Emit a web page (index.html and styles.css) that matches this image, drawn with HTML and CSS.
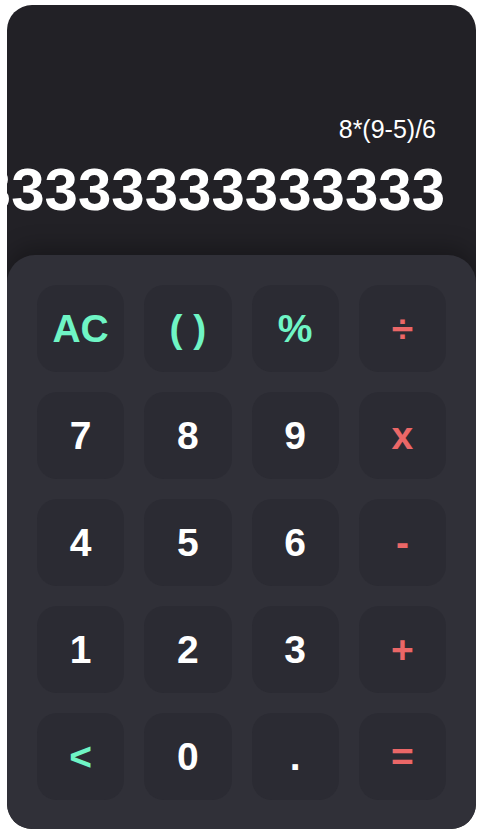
FILE: index.html
```html
<!DOCTYPE html>
<html lang="en">
<head>
<meta charset="utf-8">
<title>Calculator</title>
<link rel="stylesheet" href="styles.css">
</head>
<body>
<div class="calc">
  <div class="display">
    <div class="expr">8*(9-5)/6</div>
    <div class="result"><span>5.333333333333333</span></div>
  </div>
  <div class="keypad">
    <button class="key fn">AC</button>
    <button class="key fn">( )</button>
    <button class="key fn">%</button>
    <button class="key op">÷</button>
    <button class="key">7</button>
    <button class="key">8</button>
    <button class="key">9</button>
    <button class="key op">x</button>
    <button class="key">4</button>
    <button class="key">5</button>
    <button class="key">6</button>
    <button class="key op">-</button>
    <button class="key">1</button>
    <button class="key">2</button>
    <button class="key">3</button>
    <button class="key op">+</button>
    <button class="key fn">&lt;</button>
    <button class="key">0</button>
    <button class="key">.</button>
    <button class="key op">=</button>
  </div>
</div>
</body>
</html>
```
FILE: styles.css
```css
html, body {
  margin: 0;
  padding: 0;
  background: #ffffff;
}
body {
  font-family: "Liberation Sans", Arial, sans-serif;
  padding: 5px 2px 7px 7px;
}
.calc {
  width: 469px;
  height: 824px;
  background: #222126;
  border-radius: 25px;
  overflow: hidden;
  display: flex;
  flex-direction: column;
}
.display {
  flex: 1;
  display: flex;
  flex-direction: column;
  justify-content: flex-end;
  padding-bottom: 30px;
  min-height: 0;
  color: #ffffff;
}
.expr {
  text-align: right;
  font-size: 25px;
  line-height: 28px;
  padding-right: 40px;
  margin-bottom: 12px;
}
.result {
  display: flex;
  justify-content: flex-end;
  white-space: nowrap;
  overflow: hidden;
  font-size: 60px;
  font-weight: bold;
  line-height: 70px;
  padding-right: 31px;
}
.keypad {
  position: relative;
  height: 574px;
  box-sizing: border-box;
  background: #303038;
  border-radius: 28px 28px 25px 25px;
  box-shadow: 0 -8px 22px rgba(0, 0, 0, 0.28);
  padding: 30px 30px 29px;
  display: grid;
  grid-template-columns: repeat(4, 1fr);
  grid-template-rows: repeat(5, 87px);
  gap: 20px;
}
.key {
  border: none;
  margin: 0;
  padding: 0;
  background: #2b2b33;
  border-radius: 20px;
  color: #ffffff;
  font-family: "Liberation Sans", Arial, sans-serif;
  font-size: 39px;
  font-weight: bold;
  display: flex;
  align-items: center;
  justify-content: center;
}
.key.fn {
  color: #6ff5c5;
}
.key.op {
  color: #eb6767;
}
```
